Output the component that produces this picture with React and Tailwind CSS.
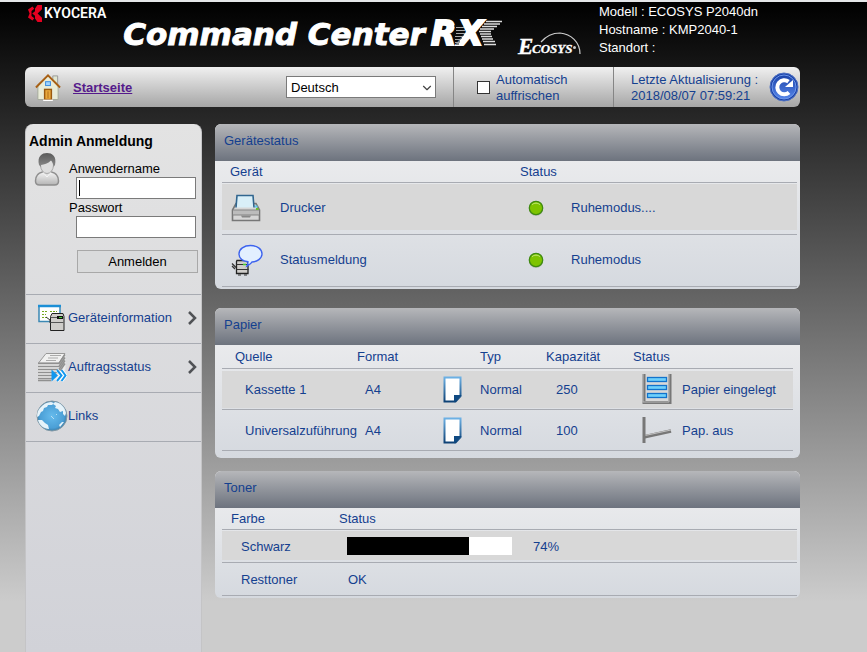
import { useState } from "react";
import { ChevronDown } from "lucide-react";

function KyoceraMark() {
    return (
        <svg width="14" height="17" viewBox="0 0 14 17" fill="#e60020" aria-hidden="true">
            <path d="M7 3.500 9.500 0H14v4.200L9.600 8.500l4.400 4.200V17H9.500L7 13.500z" />
            <path d="M0 4.500 4.500 1.500 6.300 3.800 3.500 6v5l2.800 2.200-1.800 2.300L0 12.500l1.600-4z" />
            <path d="M4.200 8.500 7 6.200v4.600z" />
        </svg>
    );
}

function RxLogo() {
    return (
        <svg width="74" height="44" viewBox="0 0 74 44" aria-hidden="true">
            <g
                fill="#fff"
                stroke="#fff"
                strokeWidth="2"
                fontFamily="DejaVu Sans, sans-serif"
                fontWeight="bold"
                fontStyle="italic"
                fontSize="33"
            >
                <text x="1" y="33">R</text>
                <text x="28" y="33">X</text>
            </g>
            <g transform="translate(0 7)">
                <path d="M24 7h9M25 10h9M25 13h10M24 16h10M24 19h8M24 22h6M26 25h3" stroke="#111" />
                <path d="M26 8.500h8M26 11.500h9M26 14.500h9M25 17.500h8M25 20.500h6M25 23.500h5" stroke="#aaa" />
                <path d="M56 2.500h16M54 5h16M52 7.500h15M50 10h14M49 12.500h12M50 15h11M51 17.500h11M52 20h11M53 22.500h12M54 25.500h12" stroke="#ddd" strokeWidth="1.300" />
            </g>
        </svg>
    );
}

function EcosysLogo() {
    return (
        <svg width="66" height="30" viewBox="0 0 66 30" aria-hidden="true">
            <path d="M24 10C30 3 37 1 43 1c11 1 20 9 20 21" fill="none" stroke="#ccc" strokeWidth="1.200" />
            <g fill="#fff" stroke="#fff" strokeWidth="0.300" fontFamily="Liberation Serif, serif" fontStyle="italic" fontWeight="bold">
                <text x="1" y="22" fontSize="23">E</text>
                <text x="15" y="21" fontSize="13">COSYS</text>
            </g>
            <circle cx="57.500" cy="15.500" r="1.500" fill="#ccc" />
        </svg>
    );
}

function HouseIcon() {
    return (
        <svg width="28" height="28" viewBox="0 0 28 29" aria-hidden="true">
            <path d="M19 3h5v9h-5z" fill="#dfe6d0" stroke="#999" />
            <path d="M3.500 12 14 3l10.500 9v15.500h-21z" fill="#e9ecd8" stroke="#a5a99a" />
            <path d="M1.500 15 14 2.500 26.500 15" fill="none" stroke="#a85f14" strokeWidth="2" />
            <rect x="11.500" y="9" width="5" height="4" fill="#9fd4ff" stroke="#3a8ce0" />
            <rect x="10.500" y="17" width="7" height="10.500" fill="#e8a83c" stroke="#9a5a10" strokeWidth="1.500" />
            <path d="M14 19v7" stroke="#b06c16" />
            <path d="M9 28.300h10" stroke="#fff" strokeWidth="1.500" />
        </svg>
    );
}

function RefreshIcon() {
    return (
        <svg width="30" height="30" viewBox="0 0 30 30" className="block" aria-hidden="true">
            <defs>
                <linearGradient id="refresh" x1="0" y1="0" x2="0" y2="1">
                    <stop offset="0" stopColor="#1b43a8" />
                    <stop offset="1" stopColor="#5686ea" />
                </linearGradient>
            </defs>
            <circle cx="15" cy="15" r="14" fill="#1b43a8" stroke="#4f72c4" />
            <circle cx="15" cy="15" r="12" fill="url(#refresh)" stroke="#6d96ea" />
            <path d="M20 20.500a7 7 0 1 1-.5-10.800" fill="none" stroke="#fff" strokeWidth="4" />
            <path d="M24 8v7h-8z" fill="#fff" />
        </svg>
    );
}

function UserIcon() {
    return (
        <svg width="26" height="35" viewBox="0 0 26 35" aria-hidden="true">
            <defs>
                <linearGradient id="user" x1="0" y1="0" x2="0" y2="1">
                    <stop offset="0" stopColor="#f4f4f4" />
                    <stop offset="1" stopColor="#b4b4b4" />
                </linearGradient>
                <linearGradient id="hair" x1="0" y1="0" x2="0" y2="1">
                    <stop offset="0" stopColor="#5a5a5a" />
                    <stop offset="1" stopColor="#8a8a8a" />
                </linearGradient>
            </defs>
            <path d="M1.500 29c0-5 2-8 7-9h9c5 1 7 4 7 9 0 3-1 4-4 4h-15c-3 0-4-1-4-4z" fill="url(#user)" stroke="#8f8f8f" strokeWidth="1.500" />
            <path d="m9 20 4 5 4-5" fill="#ddd" stroke="#f6f6f6" />
            <ellipse cx="13" cy="13" rx="6.500" ry="8.500" fill="#dedede" stroke="#aaa" />
            <path d="M5 13C3 4 8 1 13 1s10 3 8 12l-1.500 2c0-3-1-5-2.500-6.500-3 3-7 4-10 4.500v2z" fill="url(#hair)" />
        </svg>
    );
}

function DeviceInfoIcon() {
    return (
        <svg width="30" height="28" viewBox="0 0 30 28" aria-hidden="true">
            <rect x="2" y="2" width="21" height="15.500" fill="#fff" stroke="#3b88b4" strokeWidth="1.500" />
            <path d="M1 2h23" stroke="#1c8fd6" strokeWidth="2.500" />
            <path d="M5 7.500h5M13 7.500h7M5 10.500h4M5 13.500h5" stroke="#76a820" strokeDasharray="2 1" />
            <path d="M9 13l4 3v3" fill="none" stroke="#333" />
            <path d="M15 9.500h11l1 3v14H13.500v-14z" fill="#cfcdca" stroke="#222" />
            <path d="M13.500 13.500h13M13.500 18.500h13" stroke="#555" />
            <rect x="20" y="12" width="6" height="3" fill="#111" />
            <path d="M22 13.500h3" stroke="#44d030" />
        </svg>
    );
}

function JobStatusIcon() {
    return (
        <svg width="30" height="30" viewBox="0 0 30 30" aria-hidden="true">
            <path d="M1 12 9 1h19.500v16L22 28H1z" fill="#ececec" />
            <path d="M1.500 11 9 1.500h19L22 11z" fill="#f0f0f0" stroke="#999" />
            <path d="M9 8.500h10M11 6h10M13 3.500h11" stroke="#aaa" />
            <path d="M1 11.500h21l6-9M1 14.500h21l6-9M1 17.500h21l6-9M1 20.500h21l6-9M1 23.500h17M1 26.500h14M1 28.500h13" fill="none" stroke="#909090" strokeWidth="1.500" />
            <path d="M14.500 17.500 21 23.500l-6.500 6z" fill="#1297ee" />
            <g fill="none">
                <path d="m20 18 4.500 5.500L20 29M24.500 18l4 5.500-4 5.500" stroke="#fff" strokeWidth="3.500" />
                <path d="m20 18 4.500 5.500L20 29M24.500 18l4 5.500-4 5.500" stroke="#1297ee" strokeWidth="2" />
            </g>
        </svg>
    );
}

function GlobeIcon() {
    return (
        <svg width="32" height="32" viewBox="0 0 32 32" aria-hidden="true">
            <defs>
                <radialGradient id="globe" cx="0.5" cy="0.5" r="0.5">
                    <stop offset="0" stopColor="#66bbec" />
                    <stop offset="0.8" stopColor="#4b9fd6" />
                    <stop offset="1" stopColor="#3c7fab" />
                </radialGradient>
            </defs>
            <circle cx="16" cy="16" r="15" fill="url(#globe)" stroke="#8298a4" />
            <g fill="#e6f3fa">
                <path d="M4 8c3-4 7-6 11-6l3 1-2 2-4 0-1 2-3 1-1 3-2 1-2 4-2 1c0-4 1-7 3-9z" />
                <path d="M19 2c6 1 10 5 11 11l-1 3-2-2 0-3-3 1-2-3-3-1 1-2-3-2z" />
                <path d="M2 20l4 0 3 3 3 2 1 4c-5 0-10-4-11-9z" />
                <path d="M23 25l3-3 2 0-4 5z" />
            </g>
            <path d="m15 16 3 3M20 14l1 1" stroke="#b8def2" />
        </svg>
    );
}

function PrinterIcon() {
    return (
        <svg width="30" height="28" viewBox="0 0 30 28" aria-hidden="true">
            <path d="M5 9.500h20l3.500 6.500v10.500h-27V16z" fill="#d6d6d6" stroke="#777" strokeWidth="1.600" />
            <rect x="2" y="16" width="26" height="5" fill="#bcbcbc" />
            <path d="M1.500 16h27M1.500 21h27" stroke="#858585" />
            <path d="M6 1.500h16l1 12H5z" fill="#d9eff8" />
            <path d="M5 13.500 6 1.500h16l1 12" fill="none" stroke="#31668f" strokeWidth="1.600" />
            <path d="M10 21.500h10l-1 2h-8z" fill="#888" />
            <path d="M24 12.500h2.500" stroke="#5cd0f0" strokeWidth="2" />
            <path d="M25 15h2.500" stroke="#6dbf2e" strokeWidth="2" />
        </svg>
    );
}

function MessageIcon() {
    return (
        <svg width="32" height="32" viewBox="0 0 32 32" aria-hidden="true">
            <path d="M6 16.500h9l2 2v11H5.500v-12z" fill="#cfcdca" stroke="#222" strokeWidth="1.300" />
            <path d="M5.500 20.500h12M5.500 25.500h12M7 31h3M13 31h3" stroke="#333" />
            <path d="M1 19.500l4 4M1 22l3 3" stroke="#333" strokeWidth="1.300" />
            <path d="M19.500 1.500c6.500 0 11.500 3.500 11.500 8.300 0 4.700-5 8.200-10 8.200-1 2-3 3-5 4 1-2 1-3 1-4.200C12 17 8 14.500 8 9.800c0-4.800 5-8.300 11.500-8.300z" fill="#e2efff" stroke="#3d63ee" strokeWidth="1.400" />
            <path d="M12 20.500h3" stroke="#44d030" strokeWidth="1.500" />
        </svg>
    );
}

function StatusDot() {
    return (
        <svg width="16" height="17" viewBox="0 0 16 17" role="img" aria-label="OK">
            <circle cx="8" cy="9" r="7" fill="#b5b8b5" />
            <circle cx="8" cy="8" r="6.700" fill="#7ec400" stroke="#3f8a10" strokeWidth="1.300" />
            <path d="M4 4.800c2-2.200 6-2.200 8 0" fill="none" stroke="#c3ea7a" />
        </svg>
    );
}

function PageIcon() {
    return (
        <svg width="19" height="27" viewBox="0 0 19 27" className="block" aria-hidden="true">
            <defs>
                <linearGradient id="page" x1="0" y1="0" x2="0" y2="1">
                    <stop offset="0" stopColor="#6cb0e4" />
                    <stop offset="1" stopColor="#0e4276" />
                </linearGradient>
            </defs>
            <path d="M1.500 1.500h16V20l-5 5.500h-11z" fill="#fff" stroke="url(#page)" strokeWidth="2" />
            <path d="M11 26v-7h7.500z" fill="#0f4a82" />
            <path d="M11 19h7.500L11 26.500z" fill="#0f4a82" />
        </svg>
    );
}

function TrayIcon() {
    return (
        <svg width="30" height="31" viewBox="0 0 30 31" className="block" aria-hidden="true">
            <path d="M2 0v28.500h26V0" fill="none" stroke="#777" strokeWidth="3" />
            <path d="M1 0v28h26V0" fill="none" stroke="#b9b9b9" strokeWidth="1" />
            {[3.5, 11.5, 19.5].map((y) => (
                <rect key={y} x="5.500" y={y} width="19" height="4" fill="#6fd0fb" stroke="#1273cc" strokeWidth="1.300" />
            ))}
        </svg>
    );
}

function EmptyTrayIcon() {
    return (
        <svg width="30" height="26" viewBox="0 0 30 26" className="block" aria-hidden="true">
            <path d="M1.500 20 29 14" stroke="#777" strokeWidth="3.500" />
            <path d="M3 18.500 29 13" stroke="#c2c2c2" strokeWidth="1.200" />
            <path d="M2 0v26" stroke="#777" strokeWidth="3" />
        </svg>
    );
}

function Arrow() {
    return (
        <svg width="9" height="14" viewBox="0 0 9 14" fill="none" stroke="#505256" strokeWidth="2.500" aria-hidden="true">
            <path d="m1 1 6 6-6 6" />
        </svg>
    );
}

const menu = [
    { label: "Geräteinformation", icon: DeviceInfoIcon, sub: true },
    { label: "Auftragsstatus", icon: JobStatusIcon, sub: true },
    { label: "Links", icon: GlobeIcon, sub: false },
];

const devices = [
    { name: "Drucker", icon: PrinterIcon, status: "Ruhemodus...." },
    { name: "Statusmeldung", icon: MessageIcon, status: "Ruhemodus" },
];

const trays = [
    { source: "Kassette 1", format: "A4", type: "Normal", capacity: 250, icon: TrayIcon, status: "Papier eingelegt" },
    { source: "Universalzuführung", format: "A4", type: "Normal", capacity: 100, icon: EmptyTrayIcon, status: "Pap. aus" },
];

const toner = 74;

function Panel({ title, className = "", children }) {
    return (
        <section className={`overflow-hidden rounded-md bg-linear-to-b from-[#f0f0f1] to-[#d5d9df] ${className}`}>
            <h2 className="h-[37px] bg-linear-to-b from-[#b6b7ba] to-[#6d737e] px-[9px] pt-[7px] leading-5">
                {title}
            </h2>
            {children}
        </section>
    );
}

function TopBar({ language, setLanguage, auto, setAuto }) {
    return (
        <nav className="flex h-10 items-stretch rounded-md bg-linear-to-b/srgb from-[#f0f0f0] to-[#a6a6a6]">
            <div className="flex flex-1 items-center justify-between pr-[17px] pl-[9px]">
                <div className="flex items-center gap-[11px]">
                    <HouseIcon />
                    <a href="#start" className="pt-0.5 font-bold text-[#551a8b] underline">Startseite</a>
                </div>
                <div className="relative">
                    <select
                        aria-label="Sprache"
                        value={language}
                        onChange={(e) => setLanguage(e.target.value)}
                        className="block h-[22px] w-[150px] appearance-none border border-[#7a7a7a] bg-white px-1 pt-0.5 text-black"
                    >
                        <option>Deutsch</option>
                        <option>English</option>
                    </select>
                    <ChevronDown size={14} className="pointer-events-none absolute top-[5px] right-[2px] text-[#444]" />
                </div>
            </div>
            <label className="flex w-40 items-center gap-[6px] border-l border-[#858585] pl-[23px] leading-4">
                <input
                    type="checkbox"
                    checked={auto}
                    onChange={(e) => setAuto(e.target.checked)}
                    className="size-[13px] shrink-0 appearance-none border border-[#333] bg-white checked:bg-[#14408f]"
                />
                <span className="pt-0.5">Automatisch auffrischen</span>
            </label>
            <div className="flex w-[187px] items-center justify-between border-l border-[#858585] pr-px pl-[17px] leading-4">
                <p className="pt-0.5">
                    Letzte Aktualisierung :
                    <br />
                    2018/08/07 07:59:21
                </p>
                <button type="button" aria-label="Aktualisieren">
                    <RefreshIcon />
                </button>
            </div>
        </nav>
    );
}

function Sidebar() {
    const [user, setUser] = useState("");
    const [password, setPassword] = useState("");

    return (
        <aside className="w-[177px] shrink-0 rounded-t-lg border-x border-[#c4c4c6] bg-linear-to-b from-[#e3e3e3] to-[#d1d2d8]">
            <form className="h-[170px] text-black" onSubmit={(e) => e.preventDefault()}>
                <h2 className="px-[3px] pt-2 text-sm leading-[18px] font-bold">Admin Anmeldung</h2>
                <div className="flex gap-[9px] pt-[2px] pl-2">
                    <UserIcon />
                    <div className="flex w-32 flex-col pt-[9px]">
                        <label htmlFor="user" className="leading-4">Anwendername</label>
                        <div className="relative ml-[7px]">
                            <input
                                id="user"
                                value={user}
                                onChange={(e) => setUser(e.target.value)}
                                className="block h-[22px] w-[120px] border border-[#7a7a7a] bg-white px-[3px]"
                            />
                            {!user && <span className="absolute top-[3px] left-[3px] h-4 w-px bg-black" />}
                        </div>
                        <label htmlFor="password" className="leading-[17px]">Passwort</label>
                        <input
                            id="password"
                            type="password"
                            value={password}
                            onChange={(e) => setPassword(e.target.value)}
                            className="ml-[7px] block h-[22px] w-[120px] border border-[#7a7a7a] bg-white px-[3px]"
                        />
                        <button type="submit" className="mt-3 ml-2 h-[23px] w-[121px] border border-[#a8a8a8] bg-[#dadbdc]">
                            Anmelden
                        </button>
                    </div>
                </div>
            </form>
            <ul className="border-b border-[#a8abb2]">
                {menu.map(({ label, icon: Icon, sub }) => (
                    <li key={label} className="border-t border-[#a8abb2]">
                        <a href="#menu" className="flex h-12 items-center pr-1 pb-[3px] pl-2.5">
                            <span className="flex w-8 shrink-0 justify-center">
                                <Icon />
                            </span>
                            <span className="flex-1">{label}</span>
                            {sub && <Arrow />}
                        </a>
                    </li>
                ))}
            </ul>
        </aside>
    );
}

function DeviceTable() {
    return (
        <table className="w-full table-fixed">
            <colgroup>
                <col className="w-[58px]" />
                <col className="w-[240px]" />
                <col className="w-[51px]" />
                <col />
            </colgroup>
            <thead>
                <tr className="h-[21px] border-b border-[#a8abb2] text-left">
                    <th colSpan={2} className="pt-0.5 pl-2 font-normal">Gerät</th>
                    <th colSpan={2} className="pt-0.5 font-normal">Status</th>
                </tr>
            </thead>
            <tbody>
                {devices.map(({ name, icon: Icon, status }) => (
                    <tr key={name} className="group h-[52px] border-b border-[#a8abb2]">
                        <td className="bg-clip-content pt-0.5 pb-1 group-odd:bg-[#d8d8d8]">
                            <div className="flex h-[45px] items-center pt-0.5 pl-[9px]"><Icon /></div>
                        </td>
                        <td className="bg-clip-content pt-0.5 pb-1 group-odd:bg-[#d8d8d8]">
                            <div className="flex h-[45px] items-center pt-0.5">{name}</div>
                        </td>
                        <td className="bg-clip-content pt-0.5 pb-1 group-odd:bg-[#d8d8d8]">
                            <div className="flex h-[45px] items-center pt-0.5 pl-2"><StatusDot /></div>
                        </td>
                        <td className="bg-clip-content pt-0.5 pb-1 group-odd:bg-[#d8d8d8]">
                            <div className="flex h-[45px] items-center pt-0.5">{status}</div>
                        </td>
                    </tr>
                ))}
            </tbody>
        </table>
    );
}

function PaperTable() {
    return (
        <table className="w-full table-fixed">
            <colgroup>
                <col className="w-[135px]" />
                <col className="w-[86px]" />
                <col className="w-[37px]" />
                <col className="w-[66px]" />
                <col className="w-[87px]" />
                <col />
            </colgroup>
            <thead>
                <tr className="h-6 border-b border-[#a8abb2] text-left">
                    <th className="pt-0.5 pl-[13px] font-normal">Quelle</th>
                    <th colSpan={2} className="pt-0.5 font-normal">Format</th>
                    <th className="pt-0.5 font-normal">Typ</th>
                    <th className="pt-0.5 font-normal">Kapazität</th>
                    <th className="pt-0.5 font-normal">Status</th>
                </tr>
            </thead>
            <tbody>
                {trays.map(({ source, format, type, capacity, icon: Icon, status }) => (
                    <tr key={source} className="group border-b border-[#a8abb2]">
                        <td className="bg-clip-content py-0.5 group-odd:bg-[#d8d8d8]">
                            <div className="flex h-9 items-center pt-0.5 pl-[23px]">{source}</div>
                        </td>
                        <td className="bg-clip-content py-0.5 group-odd:bg-[#d8d8d8]">
                            <div className="flex h-9 items-center pt-0.5 pl-2">{format}</div>
                        </td>
                        <td className="bg-clip-content py-0.5 group-odd:bg-[#d8d8d8]">
                            <div className="flex h-9 items-center"><PageIcon /></div>
                        </td>
                        <td className="bg-clip-content py-0.5 group-odd:bg-[#d8d8d8]">
                            <div className="flex h-9 items-center pt-0.5">{type}</div>
                        </td>
                        <td className="bg-clip-content py-0.5 group-odd:bg-[#d8d8d8]">
                            <div className="flex h-9 items-center pt-0.5 pl-2.5">{capacity}</div>
                        </td>
                        <td className="bg-clip-content py-0.5 group-odd:bg-[#d8d8d8]">
                            <div className="flex h-9 items-center gap-2.5 pl-[9px]">
                                <Icon />
                                <span className="pt-0.5">{status}</span>
                            </div>
                        </td>
                    </tr>
                ))}
            </tbody>
        </table>
    );
}

function TonerTable() {
    return (
        <table className="w-full table-fixed">
            <colgroup>
                <col className="w-[117px]" />
                <col />
            </colgroup>
            <thead>
                <tr className="h-[21px] border-b border-[#a8abb2] text-left">
                    <th className="pt-0.5 pl-[9px] font-normal">Farbe</th>
                    <th className="pt-0.5 font-normal">Status</th>
                </tr>
            </thead>
            <tbody>
                <tr className="border-b border-[#a8abb2]">
                    <td className="bg-[#d8d8d8] bg-clip-content py-0.5">
                        <div className="flex h-7 items-center pt-0.5 pl-[19px]">Schwarz</div>
                    </td>
                    <td className="bg-[#d8d8d8] bg-clip-content py-0.5">
                        <div className="flex h-7 items-center gap-[21px] pl-2">
                            <div className="h-[18px] w-[165px] bg-white">
                                <div className="h-full bg-black" style={{ width: `${toner}%` }} />
                            </div>
                            <span className="pt-0.5">{toner}%</span>
                        </div>
                    </td>
                </tr>
                <tr className="border-b border-[#a8abb2]">
                    <td className="py-0.5">
                        <div className="flex h-7 items-center pt-0.5 pl-[19px]">Resttoner</div>
                    </td>
                    <td className="py-0.5">
                        <div className="flex h-7 items-center pt-0.5 pl-[9px]">OK</div>
                    </td>
                </tr>
            </tbody>
        </table>
    );
}

export default function App() {
    const [language, setLanguage] = useState("Deutsch");
    const [auto, setAuto] = useState(false);

    return (
        <div className="flex min-h-screen flex-col border-t-2 border-[#e4e6e8] bg-[#ccc] bg-linear-to-b/srgb from-black from-0% to-[#ccc] to-[600px] pr-[67px] pl-[25px] font-['Liberation_Sans',Arial,sans-serif] text-[13px] leading-4 text-[#14408f]">
            <header className="flex h-[65px] text-white">
                <div className="flex flex-1 items-start">
                    <div className="flex items-center gap-[2px] pt-[2px] pl-[3px]">
                        <KyoceraMark />
                        <span className="font-[Roboto,sans-serif] text-sm leading-[18px] font-semibold">KYOCERA</span>
                    </div>
                    <h1 className="flex items-center gap-[5px] pt-2.5 pl-[17px] font-['DejaVu_Sans',sans-serif] text-[31px] leading-[44px] font-bold whitespace-nowrap italic [-webkit-text-stroke:1px_#fff]">
                        Command Center
                        <RxLogo />
                    </h1>
                    <div className="pt-[30px] pl-[13px]">
                        <EcosysLogo />
                    </div>
                </div>
                <div className="w-[201px] shrink-0 pt-px leading-[18px]">
                    <p>Modell : ECOSYS P2040dn</p>
                    <p>Hostname : KMP2040-1</p>
                    <p>Standort :</p>
                </div>
            </header>
            <TopBar language={language} setLanguage={setLanguage} auto={auto} setAuto={setAuto} />
            <div className="flex flex-1 gap-[13px] pt-[17px]">
                <Sidebar />
                <main className="flex-1">
                    <Panel title="Gerätestatus" className="mb-[19px]">
                        <div className="pr-[3px] pb-[2px] pl-[7px]">
                            <DeviceTable />
                        </div>
                    </Panel>
                    <Panel title="Papier" className="mb-[13px]">
                        <div className="pr-[7px] pb-[7px] pl-[7px]">
                            <PaperTable />
                        </div>
                    </Panel>
                    <Panel title="Toner">
                        <div className="pr-[3px] pb-[2px] pl-[7px]">
                            <TonerTable />
                        </div>
                    </Panel>
                </main>
            </div>
        </div>
    );
}
